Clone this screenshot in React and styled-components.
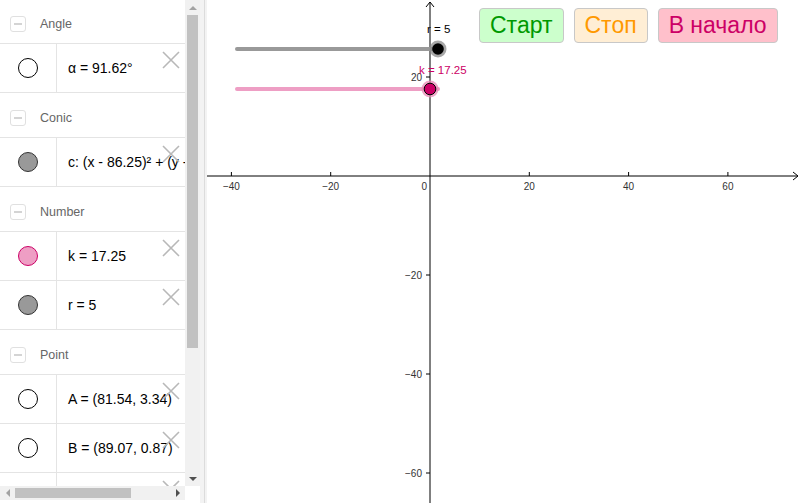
import React from "react";
import styled, { createGlobalStyle } from "styled-components";

const Global = createGlobalStyle`
  *, *::before, *::after { box-sizing: border-box; }
  html, body { margin: 0; padding: 0; background: #fff; overflow: hidden; }
  body { font-family: "Liberation Sans", Arial, sans-serif; }
`;

const Page = styled.div`
  display: flex;
  width: 800px;
  height: 503px;
  background: #fff;
`;

const Sidebar = styled.div`
  width: 200px;
  flex: none;
  display: flex;
  flex-direction: column;
  background: #fff;
`;

const SideMain = styled.div`
  height: 486px;
  display: flex;
`;

const List = styled.div`
  flex: 1;
  overflow: hidden;
  position: relative;
`;

const ListInner = styled.div`
  margin-top: -1px;
  width: 185px;
`;

const GroupHeader = styled.div`
  height: 45px;
  padding-top: 5px;
  border-bottom: 1px solid #e4e4e4;
  display: flex;
  align-items: center;
  gap: 14px;
  padding-left: 10px;
  font-size: 12.5px;
  color: #666;
`;

const Collapse = styled.div`
  width: 16px;
  height: 16px;
  border: 1px solid #e0e0e0;
  border-radius: 3px;
  display: flex;
  align-items: center;
  justify-content: center;
  &::after {
    content: "";
    width: 8px;
    height: 2px;
    background: #d4d4d4;
  }
`;

const Row = styled.div`
  height: 49px;
  border-bottom: 1px solid #e4e4e4;
  display: flex;
  position: relative;
`;

const MarbleCell = styled.div`
  width: 57px;
  flex: none;
  border-right: 1px solid #e4e4e4;
  display: flex;
  align-items: center;
  justify-content: center;
`;

const Marble = styled.div`
  width: 20px;
  height: 20px;
  border-radius: 50%;
  border: 1px solid ${(p) => p.$stroke || "#000"};
  background: ${(p) => p.$fill || "#fff"};
`;

const ItemText = styled.div`
  flex: 1;
  padding-left: 11px;
  display: flex;
  align-items: center;
  font-size: 14px;
  color: #000;
  white-space: nowrap;
  overflow: hidden;
  padding-bottom: 1px;
`;

const Close = styled.svg`
  position: absolute;
  right: 5px;
  top: 7px;
  width: 18px;
  height: 18px;
`;

const VScroll = styled.div`
  width: 15px;
  flex: none;
  background: #f1f1f1;
  display: flex;
  flex-direction: column;
  align-items: center;
`;

const Arrow = styled.div`
  width: 0;
  height: 0;
  flex: none;
  border-left: ${(p) => (p.$dir === "up" || p.$dir === "down" ? "4px solid transparent" : p.$dir === "right" ? "4px solid #505050" : "none")};
  border-right: ${(p) => (p.$dir === "up" || p.$dir === "down" ? "4px solid transparent" : p.$dir === "left" ? "4px solid #a3a3a3" : "none")};
  border-top: ${(p) => (p.$dir === "left" || p.$dir === "right" ? "4px solid transparent" : p.$dir === "down" ? "4px solid #505050" : "none")};
  border-bottom: ${(p) => (p.$dir === "left" || p.$dir === "right" ? "4px solid transparent" : p.$dir === "up" ? "4px solid #a3a3a3" : "none")};
`;

const VArrowBox = styled.div`
  height: 15px;
  display: flex;
  align-items: center;
  justify-content: center;
`;

const VTrack = styled.div`
  flex: 1;
  width: 100%;
  display: flex;
  justify-content: center;
`;

const VThumb = styled.div`
  width: 11px;
  height: 333px;
  background: #c1c1c1;
`;

const HScrollRow = styled.div`
  height: 14px;
  display: flex;
`;

const HScroll = styled.div`
  flex: 1;
  background: #f1f1f1;
  display: flex;
  align-items: center;
`;

const HArrowBox = styled.div`
  width: 15px;
  flex: none;
  display: flex;
  align-items: center;
  justify-content: center;
`;

const HTrack = styled.div`
  flex: 1;
  display: flex;
  align-items: center;
`;

const HThumb = styled.div`
  width: 116px;
  height: 10px;
  background: #c1c1c1;
`;

const Corner = styled.div`
  width: 15px;
  flex: none;
  background: #fff;
`;

const Divider = styled.div`
  width: 7px;
  flex: none;
  background: #f3f3f3;
  display: flex;
  justify-content: center;
  &::after {
    content: "";
    width: 1px;
    margin-left: 1px;
    background: #dcdcdc;
  }
`;

const Canvas = styled.div`
  flex: 1;
  position: relative;
  background: #fff;
  overflow: hidden;
`;

const Graph = styled.svg`
  display: block;
  width: 593px;
  height: 503px;
`;

const ButtonBar = styled.div`
  position: absolute;
  left: 272px;
  top: 8px;
  display: flex;
  gap: 10px;
`;

const ActionButton = styled.button`
  height: 35px;
  padding: 0 10px;
  border: 1px solid #c8c8c8;
  border-radius: 4px;
  background: ${(p) => p.$bg};
  color: ${(p) => p.$color};
  font-family: "Liberation Sans", Arial, sans-serif;
  font-size: 23px;
  line-height: 33px;
  cursor: pointer;
`;

const CloseIcon = () => (
  <Close viewBox="0 0 18 18">
    <path d="M1 1 L17 17 M17 1 L1 17" stroke="#b8b8b8" strokeWidth="1.6" fill="none" />
  </Close>
);

const groups = [
  {
    title: "Angle",
    items: [{ text: "α = 91.62°", fill: "#fff", stroke: "#000" }],
  },
  {
    title: "Conic",
    items: [{ text: "c: (x - 86.25)² + (y - 3.34)² = 25", fill: "#999", stroke: "#333" }],
  },
  {
    title: "Number",
    items: [
      { text: "k = 17.25", fill: "#ee9ec4", stroke: "#cc0066" },
      { text: "r = 5", fill: "#999", stroke: "#333" },
    ],
  },
  {
    title: "Point",
    items: [
      { text: "A = (81.54, 3.34)", fill: "#fff", stroke: "#000" },
      { text: "B = (89.07, 0.87)", fill: "#fff", stroke: "#000" },
      { text: "C = (84.62, 5.21)", fill: "#fff", stroke: "#000" },
    ],
  },
];

const X0 = 430;
const Y0 = 176;
const SX = 99.3 / 20;
const SY = 99 / 20;
const px = (v) => X0 + v * SX;
const py = (v) => Y0 - v * SY;

const AxisLabel = ({ x, y, anchor = "middle", children }) => (
  <text x={x} y={y} fontSize="10" fill="#333" textAnchor={anchor} fontFamily="Liberation Sans, Arial, sans-serif">
    {children}
  </text>
);

const GraphView = () => {
  const xt = [-40, -20, 20, 40, 60];
  const yt = [20, -20, -40, -60];
  return (
    <Graph viewBox="207 0 593 503">
      <line x1="207" y1={Y0} x2="798" y2={Y0} stroke="#000" strokeWidth="1" />
      <path d={`M793 ${Y0 - 4} L798 ${Y0} L793 ${Y0 + 4}`} stroke="#000" fill="none" strokeWidth="1" />
      <line x1={X0} y1="2" x2={X0} y2="503" stroke="#000" strokeWidth="1" />
      <path d={`M${X0 - 4} 7 L${X0} 2 L${X0 + 4} 7`} stroke="#000" fill="none" strokeWidth="1" />
      {xt.map((v) => (
        <g key={"x" + v}>
          <line x1={px(v)} y1={Y0 - 4} x2={px(v)} y2={Y0} stroke="#000" strokeWidth="1" />
          <AxisLabel x={px(v)} y={Y0 + 14}>{v < 0 ? "−" + Math.abs(v) : v}</AxisLabel>
        </g>
      ))}
      <AxisLabel x={X0 - 3} y={Y0 + 14} anchor="end">0</AxisLabel>
      {yt.map((v) => (
        <g key={"y" + v}>
          <line x1={X0 - 4} y1={py(v)} x2={X0} y2={py(v)} stroke="#000" strokeWidth="1" />
          <AxisLabel x={X0 - 8} y={py(v) + 3.5} anchor="end">{v < 0 ? "−" + Math.abs(v) : v}</AxisLabel>
        </g>
      ))}

      <line x1="237" y1="49" x2="438" y2="49" stroke="#999" strokeWidth="4" strokeLinecap="round" />
      <circle cx="438" cy="49" r="8.5" fill="#8a8a8a" fillOpacity="0.75" />
      <circle cx="438" cy="49" r="5.8" fill="#000" />
      <text x="427" y="33" fontSize="11.5" fill="#000" fontFamily="Liberation Sans, Arial, sans-serif">r = 5</text>

      <line x1="237" y1="89" x2="438" y2="89" stroke="#ee9ec4" strokeWidth="4" strokeLinecap="round" />
      <circle cx="430" cy="89" r="8.5" fill="#e889b5" fillOpacity="0.75" />
      <circle cx="430" cy="89" r="5.8" fill="#cc0066" stroke="#000" strokeWidth="1" />
      <text x="419" y="74" fontSize="11.5" fill="#cc0066" fontFamily="Liberation Sans, Arial, sans-serif">k = 17.25</text>
    </Graph>
  );
};

export default function App() {
  return (
    <>
      <Global />
      <Page>
        <Sidebar>
          <SideMain>
            <List>
              <ListInner>
                {groups.map((g) => (
                  <div key={g.title}>
                    <GroupHeader>
                      <Collapse />
                      <span>{g.title}</span>
                    </GroupHeader>
                    {g.items.map((it) => (
                      <Row key={it.text}>
                        <MarbleCell>
                          <Marble $fill={it.fill} $stroke={it.stroke} />
                        </MarbleCell>
                        <ItemText>{it.text}</ItemText>
                        <CloseIcon />
                      </Row>
                    ))}
                  </div>
                ))}
              </ListInner>
            </List>
            <VScroll>
              <VArrowBox>
                <Arrow $dir="up" />
              </VArrowBox>
              <VTrack>
                <VThumb />
              </VTrack>
              <VArrowBox>
                <Arrow $dir="down" />
              </VArrowBox>
            </VScroll>
          </SideMain>
          <HScrollRow>
            <HScroll>
              <HArrowBox>
                <Arrow $dir="left" />
              </HArrowBox>
              <HTrack>
                <HThumb />
              </HTrack>
              <HArrowBox>
                <Arrow $dir="right" />
              </HArrowBox>
            </HScroll>
            <Corner />
          </HScrollRow>
        </Sidebar>
        <Divider />
        <Canvas>
          <GraphView />
          <ButtonBar>
            <ActionButton $bg="#ccffcc" $color="#009900">Старт</ActionButton>
            <ActionButton $bg="#ffeed5" $color="#ff9900">Стоп</ActionButton>
            <ActionButton $bg="#ffc0cb" $color="#cc0066">В начало</ActionButton>
          </ButtonBar>
        </Canvas>
      </Page>
    </>
  );
}
